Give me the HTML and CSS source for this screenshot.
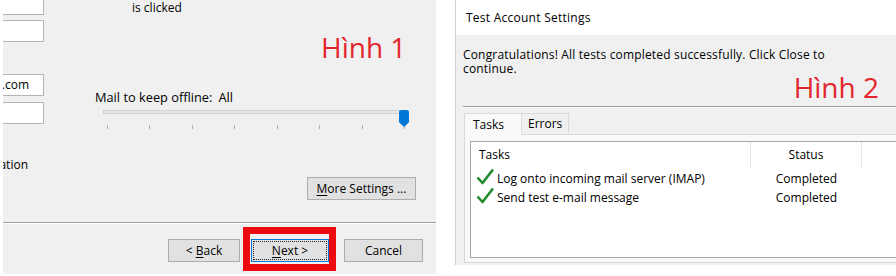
FILE: index.html
```html
<!DOCTYPE html>
<html lang="vi">
<head>
  <meta charset="UTF-8" />
  <title>Outlook account settings</title>
  <link rel="stylesheet" href="styles.css">
</head>
<body>
  <div class="wizard">
    <div class="wiz-top">
      <div class="fields">
        <div class="field"></div>
        <div class="field"></div>
        <div class="field field-far"><span>user@gmail.com</span></div>
        <div class="field field-near"></div>
      </div>
      <div class="wiz-main">
        <div class="hint">is clicked</div>
        <div class="label-red label-one">Hình 1</div>
        <div class="offline">Mail to keep offline:<span class="offline-value">All</span></div>
        <div class="slider">
          <div class="slider-track"></div>
          <div class="slider-thumb"></div>
          <div class="slider-ticks">
            <i></i><i></i><i></i><i></i><i></i><i></i><i></i><i></i>
          </div>
        </div>
      </div>
    </div>

    <div class="wiz-mid">
      <div class="cut-note"><span>Requires network connection and account information</span></div>
      <button class="btn btn-more"><u>M</u>ore Settings ...</button>
    </div>

    <div class="wiz-sep"></div>

    <div class="wiz-buttons">
      <button class="btn btn-back">&lt; <u>B</u>ack</button>
      <div class="highlight">
        <button class="btn btn-next"><u>N</u>ext &gt;</button>
      </div>
      <button class="btn btn-cancel">Cancel</button>
    </div>
  </div>

  <div class="dialog">
    <div class="dialog-title">Test Account Settings</div>
    <div class="dialog-body">
      <p class="dialog-msg">Congratulations! All tests completed successfully. Click Close to<br>continue.</p>
      <div class="label-red label-two">Hình 2</div>
      <div class="dialog-sep"></div>

      <div class="tabs">
        <div class="tab tab-active">Tasks</div>
        <div class="tab">Errors</div>
      </div>
      <div class="tab-pane">
        <div class="task-list">
          <div class="task-row task-head">
            <div class="col col-task">Tasks</div>
            <div class="col col-status">Status</div>
            <div class="col col-rest"></div>
          </div>
          <div class="task-row">
            <div class="col col-task">
              <svg class="check" width="18" height="17" viewBox="0 0 18 17"><polyline points="1.5,9.5 6.5,15 17,1.5" fill="none" stroke="#1f8a2c" stroke-width="2.6" stroke-linejoin="round"/></svg>
              Log onto incoming mail server (IMAP)
            </div>
            <div class="col col-status">Completed</div>
            <div class="col col-rest"></div>
          </div>
          <div class="task-row">
            <div class="col col-task">
              <svg class="check" width="18" height="17" viewBox="0 0 18 17"><polyline points="1.5,9.5 6.5,15 17,1.5" fill="none" stroke="#1f8a2c" stroke-width="2.6" stroke-linejoin="round"/></svg>
              Send test e-mail message
            </div>
            <div class="col col-status">Completed</div>
            <div class="col col-rest"></div>
          </div>
        </div>
      </div>
    </div>
  </div>
</body>
</html>
```

FILE: styles.css
```css
body {
  margin: 0;
  height: 276px;
  overflow: hidden;
  display: flex;
  align-items: flex-start;
  background: #fff;
  font-family: "Open Sans", "Noto Sans", sans-serif;
  font-size: 12px;
  line-height: 16px;
  color: #000;
}

/* ---------- Hình 1 : account wizard ---------- */

.wizard {
  width: 433px;
  height: 274px;
  margin-left: 3px;
  background: #f0f0f0;
  display: flex;
  flex-direction: column;
  overflow: hidden;
}

.wiz-top {
  display: flex;
  align-items: flex-start;
}

.fields {
  width: 41px;
  display: flex;
  flex-direction: column;
}

.field {
  height: 22px;
  box-sizing: border-box;
  border: 1px solid #b4b4b4;
  border-left: none;
  background: #fff;
  margin-top: 5px;
  display: flex;
  justify-content: flex-end;
  overflow: hidden;
  white-space: nowrap;
  padding-right: 14px;
  line-height: 20px;
}

.field:first-child { margin-top: -7px; }
.field-far { margin-top: 32px; }
.field-near { margin-top: 6px; }

.wiz-main {
  flex: 1;
}

.hint {
  margin-left: 88px;
}

.label-red {
  font-size: 28px;
  line-height: 28px;
  color: #e3262d;
}

.label-one {
  margin: 17px 0 0 277px;
}

.offline {
  margin: 28px 0 0 51px;
  font-size: 12.8px;
}

.offline-value {
  margin-left: 6px;
}

.slider {
  position: relative;
  width: 308px;
  height: 24px;
  margin: 5px 0 0 59px;
}

.slider-track {
  width: 302px;
  height: 4px;
  margin-top: 4px;
  box-sizing: border-box;
  background: #e7e7e7;
  border: 1px solid #d2d2d2;
}

.slider-thumb {
  position: absolute;
  left: 296px;
  top: 0;
  width: 10px;
  height: 17px;
  background: #0078d7;
  border-radius: 2px 2px 0 0;
  clip-path: polygon(0 0, 100% 0, 100% 72%, 50% 100%, 0 72%);
}

.slider-ticks {
  display: flex;
  justify-content: space-between;
  width: 298px;
  height: 4px;
  margin: 11px 0 0 4px;
}

.slider-ticks i {
  width: 1px;
  background: #b0b0b0;
}

.wiz-mid {
  display: flex;
  align-items: flex-start;
  height: 88px;
}

.cut-note {
  width: 25px;
  margin-top: 23px;
  display: flex;
  justify-content: flex-end;
  overflow: hidden;
  white-space: nowrap;
}

.btn {
  font: inherit;
  color: #000;
  height: 23px;
  padding: 0;
  box-sizing: border-box;
  background: #e1e1e1;
  border: 1px solid #adadad;
  line-height: 20px;
}

.btn u {
  text-decoration-thickness: 1px;
  text-underline-offset: 2px;
}

.btn-more {
  width: 109px;
  margin: 43px 20px 0 auto;
}

.wiz-sep {
  height: 1px;
  background: #a0a0a0;
  border-bottom: 1px solid #fff;
}

.wiz-buttons {
  display: flex;
  align-items: flex-start;
  padding-left: 165px;
  margin-top: 3px;
}

.btn-back {
  width: 72px;
  margin-top: 12px;
}

.highlight {
  margin-left: 3px;
  border: 7px solid #ec0a0f;
  padding: 5px 0 2px 1px;
}

.btn-next {
  display: block;
  width: 78px;
  border-color: #0078d7;
  outline: 1px dotted #222;
  outline-offset: -3px;
}

.btn-cancel {
  width: 79px;
  margin: 12px 0 0 8px;
}

/* ---------- Hình 2 : test account dialog ---------- */

.dialog {
  flex: 1;
  height: 265px;
  margin-left: 19px;
  border-left: 1px solid #cfcfcf;
  display: flex;
  flex-direction: column;
  overflow: hidden;
}

.dialog-title {
  height: 35px;
  box-sizing: border-box;
  padding: 10px 0 0 10px;
  background: #fff;
  letter-spacing: 0.25px;
}

.dialog-body {
  flex: 1;
  background: #f0f0f0;
  padding-left: 7px;
}

.dialog-msg {
  margin: 13px 0 0;
  line-height: 14px;
  white-space: nowrap;
  letter-spacing: 0.17px;
}

.label-two {
  margin-right: 17px;
  line-height: 22px;
  text-align: right;
}

.dialog-sep {
  height: 1px;
  margin-top: 8px;
  background: #a0a0a0;
  border-bottom: 1px solid #fff;
}

.tabs {
  display: flex;
  align-items: flex-end;
  margin: 4px 0 0 1px;
  height: 22px;
  position: relative;
  z-index: 1;
}

.tab {
  box-sizing: border-box;
  height: 20px;
  padding: 2px 0 0 6px;
  width: 48px;
  border: 1px solid #d9d9d9;
  border-bottom: none;
  background: #f0f0f0;
  margin-bottom: 1px;
}

.tab-active {
  height: 22px;
  width: 57px;
  padding: 3px 0 0 8px;
  background: #f9f9f9;
  margin-bottom: -1px;
  border-right: none;
}

.tab-pane {
  margin-left: 1px;
  margin-right: -20px;
  border: 1px solid #d9d9d9;
  background: #f9f9f9;
  padding: 6px 0 4px 5px;
}

.task-list {
  height: 117px;
  box-sizing: border-box;
  border: 1px solid #a5a5a5;
  background: #fff;
}

.task-row {
  display: grid;
  grid-template-columns: 280px 111px 1fr;
  line-height: 19px;
}

.task-head {
  line-height: 16px;
  height: 27px;
}

.task-head .col {
  padding-top: 5px;
  border-right: 1px solid #e5e5e5;
}

.task-head .col-rest { border-right: none; }

.col-task {
  padding-left: 8px;
  display: flex;
  align-items: flex-start;
  white-space: nowrap;
}

.task-row:not(.task-head) .col-task {
  padding-left: 5px;
}

.check {
  margin: -1px 3px 0 0;
  flex: none;
}

.col-status {
  text-align: center;
}
```
